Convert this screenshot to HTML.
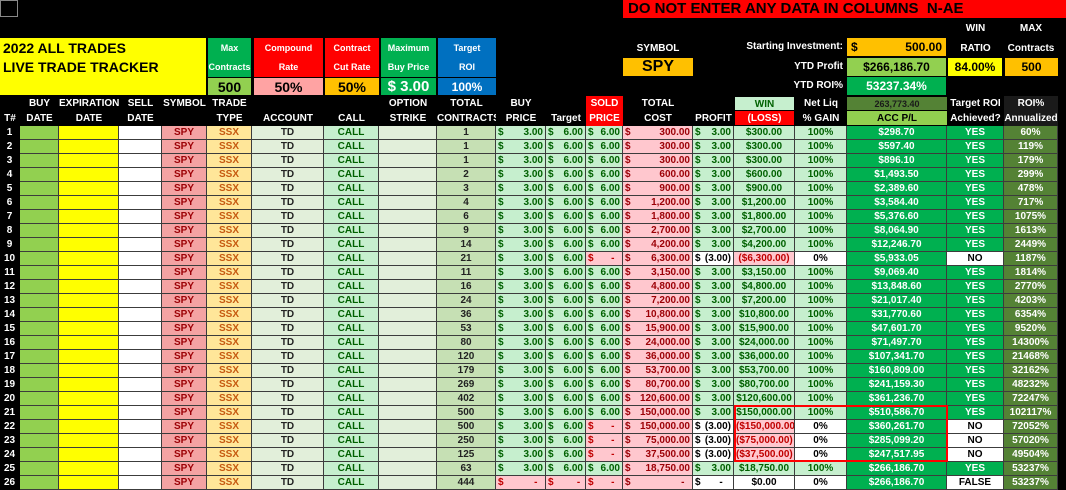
<!DOCTYPE html>
<html><head><meta charset="utf-8"><style>
*{margin:0;padding:0;box-sizing:border-box}
body{width:1066px;height:490px;background:#000;position:relative;overflow:hidden;font-family:"Liberation Sans",Arial,sans-serif;font-weight:bold;font-size:10px}
.a{position:absolute;display:flex;align-items:center;justify-content:center;text-align:center;line-height:18px}
.r,.h{position:absolute;left:0;display:grid;grid-template-columns:20px 39px 60px 43px 45px 45px 72px 55px 58px 59px 50px 40px 37px 70px 41px 61px 52px 100px 57px 54px;width:1058px}
.r{height:14px}
.r>i{font-style:normal;border-right:1px solid #3c3c3c;border-bottom:1px solid #3c3c3c;line-height:13px;text-align:center;white-space:nowrap;overflow:hidden;padding:0 2px}
.r>i:nth-child(1){background:#000;color:#fff;border-color:#000}
.r>i:nth-child(2){background:#92d050}
.r>i:nth-child(3){background:#ffff00}
.r>i:nth-child(4){background:#fff}
.r>i:nth-child(5){background:#f4a3a3;color:#9c0006}
.r>i:nth-child(6){background:#ffe699;color:#c65911}
.r>i:nth-child(7){background:#e2efda;color:#222}
.r>i:nth-child(8){background:#c6efce;color:#006100}
.r>i:nth-child(9){background:#e2efda}
.r>i:nth-child(10){background:#c6e0b4;color:#222}
.r>i:nth-child(11),.r>i:nth-child(12),.r>i:nth-child(13),.r>i:nth-child(15){background:#c6efce;color:#006100;text-align:right}
.r>i:nth-child(14){background:#ffc7ce;color:#9c0006;text-align:right}
.r>i:nth-child(16),.r>i:nth-child(17){background:#c6efce;color:#006100}
.r>i:nth-child(18),.r>i:nth-child(19){background:#00b050;color:#fff}
.r>i:nth-child(20){background:#548235;color:#fff}
.r>i s{float:left;text-decoration:none}
.r>i.p{background:#ffc7ce;color:#c00000}
.r>i.w{background:#fff;color:#000}
.h{height:15px;color:#fff}
.h>i{font-style:normal;text-align:center;line-height:15px;white-space:nowrap;overflow:hidden}
</style></head><body>
<div style="position:absolute;left:0;top:0;width:18px;height:17px;border:1px solid #888"></div>
<div class="a" style="left:623px;top:0;width:443px;height:18px;background:#f00;justify-content:flex-start;padding-left:5px;font-size:15px;color:#000">DO NOT ENTER ANY DATA IN COLUMNS&nbsp; N-AE</div>
<div class="a" style="left:947px;top:20px;width:57px;height:17px;color:#fff">WIN</div>
<div class="a" style="left:1004px;top:20px;width:54px;height:17px;color:#fff">MAX</div>
<div style="position:absolute;left:0;top:38px;width:206px;height:57px;background:#ffff00;font-size:14px;line-height:19px;padding:1px 3px">2022 ALL TRADES<br>LIVE TRADE TRACKER</div>
<div class="a" style="left:208px;top:38px;width:43px;height:39px;background:#00b050;color:#fff;font-size:9px;line-height:19px">Max<br>Contracts</div>
<div class="a" style="left:208px;top:78px;width:43px;height:17px;background:#92d050;font-size:14px">500</div>
<div class="a" style="left:254px;top:38px;width:69px;height:39px;background:#f00;color:#fff;font-size:9px;line-height:19px">Compound<br>Rate</div>
<div class="a" style="left:254px;top:78px;width:69px;height:17px;background:#ffa3a3;font-size:14px">50%</div>
<div class="a" style="left:325px;top:38px;width:54px;height:39px;background:#f00;color:#fff;font-size:9px;line-height:19px">Contract<br>Cut Rate</div>
<div class="a" style="left:325px;top:78px;width:54px;height:17px;background:#ffc000;font-size:14px">50%</div>
<div class="a" style="left:381px;top:38px;width:55px;height:39px;background:#00b050;color:#fff;font-size:9px;line-height:19px">Maximum<br>Buy Price</div>
<div class="a" style="left:381px;top:78px;width:55px;height:17px;background:#00b050;color:#fff;font-size:15px">$ 3.00</div>
<div class="a" style="left:438px;top:38px;width:58px;height:39px;background:#0070c0;color:#fff;font-size:9px;line-height:19px">Target<br>ROI</div>
<div class="a" style="left:438px;top:78px;width:58px;height:17px;background:#0070c0;color:#fff;font-size:12px">100%</div>
<div class="a" style="left:623px;top:40px;width:70px;height:17px;color:#fff">SYMBOL</div>
<div class="a" style="left:623px;top:58px;width:70px;height:18px;background:#ffc000;font-size:16px">SPY</div>
<div class="a" style="left:650px;top:38px;width:193px;height:18px;color:#fff;justify-content:flex-end">Starting Investment:</div>
<div class="a" style="left:847px;top:38px;width:99px;height:18px;background:#ffc000;justify-content:space-between;padding:0 4px;font-size:12px"><span>$</span><span>500.00</span></div>
<div class="a" style="left:700px;top:58px;width:143px;height:18px;color:#fff;justify-content:flex-end">YTD Profit</div>
<div class="a" style="left:847px;top:58px;width:99px;height:18px;background:#92d050;font-size:12px">$266,186.70</div>
<div class="a" style="left:700px;top:77px;width:143px;height:18px;color:#fff;justify-content:flex-end">YTD ROI%</div>
<div class="a" style="left:847px;top:77px;width:99px;height:18px;background:#00b050;color:#fff;font-size:12px">53237.34%</div>
<div class="a" style="left:947px;top:40px;width:57px;height:17px;color:#fff">RATIO</div>
<div class="a" style="left:1004px;top:40px;width:54px;height:17px;color:#fff">Contracts</div>
<div class="a" style="left:948px;top:58px;width:54px;height:18px;background:#ffff00;font-size:12px">84.00%</div>
<div class="a" style="left:1005px;top:58px;width:53px;height:18px;background:#ffc000;font-size:12px">500</div>
<div class="h" style="top:96px"><i></i><i>BUY</i><i>EXPIRATION</i><i>SELL</i><i>SYMBOL</i><i>TRADE</i><i></i><i></i><i>OPTION</i><i>TOTAL</i><i>BUY</i><i></i><i style="background:#f00">SOLD</i><i>TOTAL</i><i></i><i style="background:#c6efce;color:#006100;margin:1px">WIN</i><i>Net Liq</i><i style="background:#548235;color:#1a1a1a;font-size:9px;margin:1px 0">263,773.40</i><i>Target ROI</i><i style="background:#1a1a1a">ROI%</i></div>
<div class="h" style="top:111px"><i>T#</i><i>DATE</i><i>DATE</i><i>DATE</i><i></i><i>TYPE</i><i>ACCOUNT</i><i>CALL</i><i>STRIKE</i><i>CONTRACTS</i><i>PRICE</i><i>Target</i><i style="background:#f00">PRICE</i><i>COST</i><i>PROFIT</i><i style="background:#f00;margin:0 1px 1px">(LOSS)</i><i>% GAIN</i><i style="background:#92d050;color:#000;margin:0 0 1px">ACC P/L</i><i>Achieved?</i><i style="background:#1a1a1a">Annualized</i></div>

<div class="r" style="top:126px"><i>1</i><i></i><i></i><i></i><i>SPY</i><i>SSX</i><i>TD</i><i>CALL</i><i></i><i>1</i><i><s>$</s>3.00</i><i><s>$</s>6.00</i><i><s>$</s>6.00</i><i><s>$</s>300.00</i><i><s>$</s>3.00</i><i>$300.00</i><i>100%</i><i>$298.70</i><i>YES</i><i>60%</i></div>
<div class="r" style="top:140px"><i>2</i><i></i><i></i><i></i><i>SPY</i><i>SSX</i><i>TD</i><i>CALL</i><i></i><i>1</i><i><s>$</s>3.00</i><i><s>$</s>6.00</i><i><s>$</s>6.00</i><i><s>$</s>300.00</i><i><s>$</s>3.00</i><i>$300.00</i><i>100%</i><i>$597.40</i><i>YES</i><i>119%</i></div>
<div class="r" style="top:154px"><i>3</i><i></i><i></i><i></i><i>SPY</i><i>SSX</i><i>TD</i><i>CALL</i><i></i><i>1</i><i><s>$</s>3.00</i><i><s>$</s>6.00</i><i><s>$</s>6.00</i><i><s>$</s>300.00</i><i><s>$</s>3.00</i><i>$300.00</i><i>100%</i><i>$896.10</i><i>YES</i><i>179%</i></div>
<div class="r" style="top:168px"><i>4</i><i></i><i></i><i></i><i>SPY</i><i>SSX</i><i>TD</i><i>CALL</i><i></i><i>2</i><i><s>$</s>3.00</i><i><s>$</s>6.00</i><i><s>$</s>6.00</i><i><s>$</s>600.00</i><i><s>$</s>3.00</i><i>$600.00</i><i>100%</i><i>$1,493.50</i><i>YES</i><i>299%</i></div>
<div class="r" style="top:182px"><i>5</i><i></i><i></i><i></i><i>SPY</i><i>SSX</i><i>TD</i><i>CALL</i><i></i><i>3</i><i><s>$</s>3.00</i><i><s>$</s>6.00</i><i><s>$</s>6.00</i><i><s>$</s>900.00</i><i><s>$</s>3.00</i><i>$900.00</i><i>100%</i><i>$2,389.60</i><i>YES</i><i>478%</i></div>
<div class="r" style="top:196px"><i>6</i><i></i><i></i><i></i><i>SPY</i><i>SSX</i><i>TD</i><i>CALL</i><i></i><i>4</i><i><s>$</s>3.00</i><i><s>$</s>6.00</i><i><s>$</s>6.00</i><i><s>$</s>1,200.00</i><i><s>$</s>3.00</i><i>$1,200.00</i><i>100%</i><i>$3,584.40</i><i>YES</i><i>717%</i></div>
<div class="r" style="top:210px"><i>7</i><i></i><i></i><i></i><i>SPY</i><i>SSX</i><i>TD</i><i>CALL</i><i></i><i>6</i><i><s>$</s>3.00</i><i><s>$</s>6.00</i><i><s>$</s>6.00</i><i><s>$</s>1,800.00</i><i><s>$</s>3.00</i><i>$1,800.00</i><i>100%</i><i>$5,376.60</i><i>YES</i><i>1075%</i></div>
<div class="r" style="top:224px"><i>8</i><i></i><i></i><i></i><i>SPY</i><i>SSX</i><i>TD</i><i>CALL</i><i></i><i>9</i><i><s>$</s>3.00</i><i><s>$</s>6.00</i><i><s>$</s>6.00</i><i><s>$</s>2,700.00</i><i><s>$</s>3.00</i><i>$2,700.00</i><i>100%</i><i>$8,064.90</i><i>YES</i><i>1613%</i></div>
<div class="r" style="top:238px"><i>9</i><i></i><i></i><i></i><i>SPY</i><i>SSX</i><i>TD</i><i>CALL</i><i></i><i>14</i><i><s>$</s>3.00</i><i><s>$</s>6.00</i><i><s>$</s>6.00</i><i><s>$</s>4,200.00</i><i><s>$</s>3.00</i><i>$4,200.00</i><i>100%</i><i>$12,246.70</i><i>YES</i><i>2449%</i></div>
<div class="r" style="top:252px"><i>10</i><i></i><i></i><i></i><i>SPY</i><i>SSX</i><i>TD</i><i>CALL</i><i></i><i>21</i><i><s>$</s>3.00</i><i><s>$</s>6.00</i><i class="p"><s>$</s>-&nbsp;&nbsp;</i><i><s>$</s>6,300.00</i><i class="w"><s>$</s>(3.00)</i><i class="p">($6,300.00)</i><i class="w">0%</i><i>$5,933.05</i><i class="w">NO</i><i>1187%</i></div>
<div class="r" style="top:266px"><i>11</i><i></i><i></i><i></i><i>SPY</i><i>SSX</i><i>TD</i><i>CALL</i><i></i><i>11</i><i><s>$</s>3.00</i><i><s>$</s>6.00</i><i><s>$</s>6.00</i><i><s>$</s>3,150.00</i><i><s>$</s>3.00</i><i>$3,150.00</i><i>100%</i><i>$9,069.40</i><i>YES</i><i>1814%</i></div>
<div class="r" style="top:280px"><i>12</i><i></i><i></i><i></i><i>SPY</i><i>SSX</i><i>TD</i><i>CALL</i><i></i><i>16</i><i><s>$</s>3.00</i><i><s>$</s>6.00</i><i><s>$</s>6.00</i><i><s>$</s>4,800.00</i><i><s>$</s>3.00</i><i>$4,800.00</i><i>100%</i><i>$13,848.60</i><i>YES</i><i>2770%</i></div>
<div class="r" style="top:294px"><i>13</i><i></i><i></i><i></i><i>SPY</i><i>SSX</i><i>TD</i><i>CALL</i><i></i><i>24</i><i><s>$</s>3.00</i><i><s>$</s>6.00</i><i><s>$</s>6.00</i><i><s>$</s>7,200.00</i><i><s>$</s>3.00</i><i>$7,200.00</i><i>100%</i><i>$21,017.40</i><i>YES</i><i>4203%</i></div>
<div class="r" style="top:308px"><i>14</i><i></i><i></i><i></i><i>SPY</i><i>SSX</i><i>TD</i><i>CALL</i><i></i><i>36</i><i><s>$</s>3.00</i><i><s>$</s>6.00</i><i><s>$</s>6.00</i><i><s>$</s>10,800.00</i><i><s>$</s>3.00</i><i>$10,800.00</i><i>100%</i><i>$31,770.60</i><i>YES</i><i>6354%</i></div>
<div class="r" style="top:322px"><i>15</i><i></i><i></i><i></i><i>SPY</i><i>SSX</i><i>TD</i><i>CALL</i><i></i><i>53</i><i><s>$</s>3.00</i><i><s>$</s>6.00</i><i><s>$</s>6.00</i><i><s>$</s>15,900.00</i><i><s>$</s>3.00</i><i>$15,900.00</i><i>100%</i><i>$47,601.70</i><i>YES</i><i>9520%</i></div>
<div class="r" style="top:336px"><i>16</i><i></i><i></i><i></i><i>SPY</i><i>SSX</i><i>TD</i><i>CALL</i><i></i><i>80</i><i><s>$</s>3.00</i><i><s>$</s>6.00</i><i><s>$</s>6.00</i><i><s>$</s>24,000.00</i><i><s>$</s>3.00</i><i>$24,000.00</i><i>100%</i><i>$71,497.70</i><i>YES</i><i>14300%</i></div>
<div class="r" style="top:350px"><i>17</i><i></i><i></i><i></i><i>SPY</i><i>SSX</i><i>TD</i><i>CALL</i><i></i><i>120</i><i><s>$</s>3.00</i><i><s>$</s>6.00</i><i><s>$</s>6.00</i><i><s>$</s>36,000.00</i><i><s>$</s>3.00</i><i>$36,000.00</i><i>100%</i><i>$107,341.70</i><i>YES</i><i>21468%</i></div>
<div class="r" style="top:364px"><i>18</i><i></i><i></i><i></i><i>SPY</i><i>SSX</i><i>TD</i><i>CALL</i><i></i><i>179</i><i><s>$</s>3.00</i><i><s>$</s>6.00</i><i><s>$</s>6.00</i><i><s>$</s>53,700.00</i><i><s>$</s>3.00</i><i>$53,700.00</i><i>100%</i><i>$160,809.00</i><i>YES</i><i>32162%</i></div>
<div class="r" style="top:378px"><i>19</i><i></i><i></i><i></i><i>SPY</i><i>SSX</i><i>TD</i><i>CALL</i><i></i><i>269</i><i><s>$</s>3.00</i><i><s>$</s>6.00</i><i><s>$</s>6.00</i><i><s>$</s>80,700.00</i><i><s>$</s>3.00</i><i>$80,700.00</i><i>100%</i><i>$241,159.30</i><i>YES</i><i>48232%</i></div>
<div class="r" style="top:392px"><i>20</i><i></i><i></i><i></i><i>SPY</i><i>SSX</i><i>TD</i><i>CALL</i><i></i><i>402</i><i><s>$</s>3.00</i><i><s>$</s>6.00</i><i><s>$</s>6.00</i><i><s>$</s>120,600.00</i><i><s>$</s>3.00</i><i>$120,600.00</i><i>100%</i><i>$361,236.70</i><i>YES</i><i>72247%</i></div>
<div class="r" style="top:406px"><i>21</i><i></i><i></i><i></i><i>SPY</i><i>SSX</i><i>TD</i><i>CALL</i><i></i><i>500</i><i><s>$</s>3.00</i><i><s>$</s>6.00</i><i><s>$</s>6.00</i><i><s>$</s>150,000.00</i><i><s>$</s>3.00</i><i>$150,000.00</i><i>100%</i><i>$510,586.70</i><i>YES</i><i>102117%</i></div>
<div class="r" style="top:420px"><i>22</i><i></i><i></i><i></i><i>SPY</i><i>SSX</i><i>TD</i><i>CALL</i><i></i><i>500</i><i><s>$</s>3.00</i><i><s>$</s>6.00</i><i class="p"><s>$</s>-&nbsp;&nbsp;</i><i><s>$</s>150,000.00</i><i class="w"><s>$</s>(3.00)</i><i class="p">($150,000.00)</i><i class="w">0%</i><i>$360,261.70</i><i class="w">NO</i><i>72052%</i></div>
<div class="r" style="top:434px"><i>23</i><i></i><i></i><i></i><i>SPY</i><i>SSX</i><i>TD</i><i>CALL</i><i></i><i>250</i><i><s>$</s>3.00</i><i><s>$</s>6.00</i><i class="p"><s>$</s>-&nbsp;&nbsp;</i><i><s>$</s>75,000.00</i><i class="w"><s>$</s>(3.00)</i><i class="p">($75,000.00)</i><i class="w">0%</i><i>$285,099.20</i><i class="w">NO</i><i>57020%</i></div>
<div class="r" style="top:448px"><i>24</i><i></i><i></i><i></i><i>SPY</i><i>SSX</i><i>TD</i><i>CALL</i><i></i><i>125</i><i><s>$</s>3.00</i><i><s>$</s>6.00</i><i class="p"><s>$</s>-&nbsp;&nbsp;</i><i><s>$</s>37,500.00</i><i class="w"><s>$</s>(3.00)</i><i class="p">($37,500.00)</i><i class="w">0%</i><i>$247,517.95</i><i class="w">NO</i><i>49504%</i></div>
<div class="r" style="top:462px"><i>25</i><i></i><i></i><i></i><i>SPY</i><i>SSX</i><i>TD</i><i>CALL</i><i></i><i>63</i><i><s>$</s>3.00</i><i><s>$</s>6.00</i><i><s>$</s>6.00</i><i><s>$</s>18,750.00</i><i><s>$</s>3.00</i><i>$18,750.00</i><i>100%</i><i>$266,186.70</i><i>YES</i><i>53237%</i></div>
<div class="r" style="top:476px"><i>26</i><i></i><i></i><i></i><i>SPY</i><i>SSX</i><i>TD</i><i>CALL</i><i></i><i>444</i><i class="p"><s>$</s>-&nbsp;&nbsp;</i><i class="p"><s>$</s>-&nbsp;</i><i class="p"><s>$</s>-&nbsp;&nbsp;</i><i><s>$</s>-&nbsp;&nbsp;</i><i class="w"><s>$</s>-&nbsp;&nbsp;&nbsp;</i><i class="w">$0.00</i><i class="w">0%</i><i>$266,186.70</i><i class="w">FALSE</i><i>53237%</i></div>

<div style="position:absolute;left:734px;top:405px;width:214px;height:57px;border:2px solid #f00"></div>
</body></html>
